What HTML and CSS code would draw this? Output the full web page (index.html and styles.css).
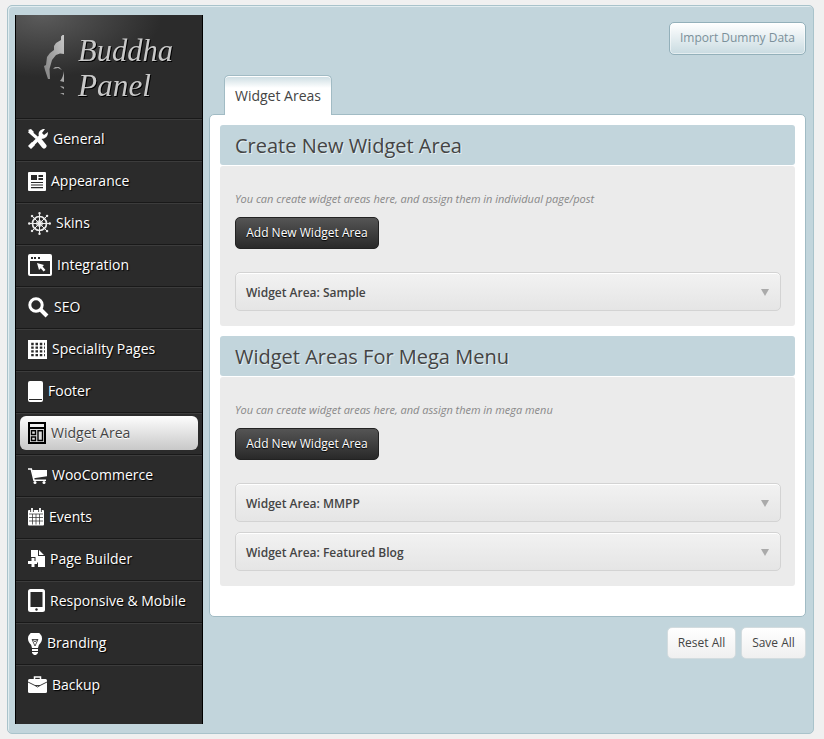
FILE: index.html
```html
<!DOCTYPE html>
<html lang="en">
<head>
<meta charset="utf-8">
<title>Buddha Panel</title>
<link rel="stylesheet" href="styles.css">
</head>
<body>
<div class="wrapper">
  <aside class="sidebar">
    <header class="brand">
      <svg class="face" width="24" height="62" viewBox="0 0 24 62"><defs><linearGradient id="silver" x1="1" x2="0" y1="0" y2="1"><stop stop-color="#c8c8c8"/><stop offset="1" stop-color="#777"/></linearGradient></defs><path fill="url(#silver)" d="M20 0H18.500L17 1.500V5L12 8L10 11V15L6 18L3 22L2 30L0 31L1 35L4 44H6L5.500 34L8 25L12 20L16 18.500L20 19ZM9 34L11 32H15L18 35L14 33ZM20 36V47L16 46Q19 43 20 36ZM16 51.500Q18 51 20 52V54ZM16 58H20V60Z"/></svg>
      <svg class="wordmark" width="102" height="70" viewBox="0 0 102 70"><text x="2" y="26" textLength="95" lengthAdjust="spacingAndGlyphs">Buddha</text><text x="2" y="61" textLength="73" lengthAdjust="spacingAndGlyphs">Panel</text></svg>
    </header>
    <nav>
      <a class="item"><svg class="up" width="20" height="20" viewBox="0 0 20 20"><path fill="none" stroke="#fff" stroke-width="3" d="M1 2L9 9"/><path fill="none" stroke="#fff" stroke-width="5" stroke-linecap="round" d="M12 12L16 17"/><path fill="none" stroke="#fff" stroke-width="3.6" d="M2 18L14 6"/><path fill="#fff" d="M11 8Q9 2 15 0L17 0L14 4L16 6L20 3Q20 10 13 10ZM0 1L3 0L6 3L4 5ZM0 17L4 13L7 16L3 20Z"/></svg><span>General</span></a>
      <a class="item"><svg width="18" height="19" viewBox="0 0 18 19"><rect width="18" height="19" rx="1" fill="#fff"/><path fill="none" stroke="#292929" stroke-width="1.2" d="M3 10.5H15M3 13H15M3 15.6H15"/><path fill="#292929" d="M3 3H9V8H3ZM10.500 3H15V5H10.500ZM10.500 6H15V8H10.500Z"/></svg><span>Appearance</span></a>
      <a class="item"><svg width="23" height="23" viewBox="0 0 23 23"><g fill="none" stroke="#eee"><circle cx="11.5" cy="11.5" r="7" stroke-width="1.7"/><circle cx="11.5" cy="11.5" r="2.7" stroke-width="1.2"/><path d="M11.5 1V22M1 11.5H22M4 4L19 19M19 4L4 19"/><path stroke-width="2.4" stroke-linecap="round" d="M11.5 1.2V1.300M11.500 21.700V21.800M1.200 11.500H1.300M21.700 11.500H21.800M4 4L4.100 4.100M19 19L19.100 19.100M19 4L19.100 3.900M4 19L4.100 18.900"/></g></svg><span>Skins</span></a>
      <a class="item"><svg class="up" width="24" height="22" viewBox="0 0 24 22"><rect width="24" height="22" rx="2" fill="#fff"/><path fill="#292929" d="M2 7H22V20H2ZM3 3H5V5H3ZM6 3H8V5H6ZM10 3H12V5H10Z"/><path fill="#fff" d="M9 9L16 11L14.5 12.6L17.5 16L15.5 17.5L12.8 14.3L11 16Z"/></svg><span>Integration</span></a>
      <a class="item"><svg width="21" height="21" viewBox="0 0 21 21"><circle cx="8" cy="8" r="6.2" fill="none" stroke="#fff" stroke-width="3"/><path stroke="#fff" stroke-width="4" d="M12 12L19 19"/></svg><span>SEO</span></a>
      <a class="item"><svg width="19" height="19" viewBox="0 0 19 19"><path fill="#fff" d="M0 0H19V19H0Z"/><path fill="none" stroke="#292929" stroke-width="2.3" stroke-dasharray="2.5 1.8" d="M3.2 4H17M3.2 7.7H17M3.2 11.4H17M3.2 15.1H17"/></svg><span>Speciality Pages</span></a>
      <a class="item"><svg width="15" height="21" viewBox="0 0 15 21"><rect width="15" height="21" rx="2" fill="#fff"/><path stroke="#292929" d="M1 18.5H14"/></svg><span>Footer</span></a>
      <a class="item active"><svg class="up" width="18" height="22" viewBox="0 0 18 22"><path d="M0 0H18V22H0Z"/><path fill="#eee" d="M2 2H16V5H2Z"/><path fill="#ddd" d="M2 7H16V20H2Z"/><path fill="none" stroke="#000" stroke-width="1.4" d="M3.5 8.7H7.5V12.5H3.5ZM3.5 15H7.5V18.5H3.5ZM10 8.7H14.5V18.5H10Z"/></svg><span>Widget Area</span></a>
      <a class="item"><svg width="19" height="16" viewBox="0 0 19 16"><path fill="none" stroke="#fff" stroke-width="1.6" d="M0 1H3.3L6 12.3H18"/><path fill="#fff" d="M4 2H19V8.2L5.7 10.2Z"/><circle cx="7" cy="14.5" r="1.5" fill="#fff"/><circle cx="16" cy="14.5" r="1.5" fill="#fff"/></svg><span>WooCommerce</span></a>
      <a class="item"><svg class="up" width="16" height="18" viewBox="0 0 16 18"><rect y="2" width="16" height="15.500" rx="1" fill="#fff"/><path fill="none" stroke="#292929" stroke-width=".7" d="M1 6H15M1 9.500H15M1 13H15M4.500 6V16.500M8 6V16.500M11.500 6V16.500"/><path stroke="#292929" stroke-width="3.5" d="M4 0V4M12 0V4"/><path stroke="#fff" stroke-width="1.8" d="M4 0V4M12 0V4"/></svg><span>Events</span></a>
      <a class="item"><svg class="up" width="17" height="18" viewBox="0 0 17 18"><path fill="#fff" d="M3 0H10V6H17V17H10V12.500H7.500V7H3ZM11 0L16 5H11ZM3.500 8H6.500V11H9V14H6.500V17H3.500V14H0V11H3.500Z"/></svg><span>Page Builder</span></a>
      <a class="item"><svg class="up" width="17" height="23" viewBox="0 0 17 23"><rect width="17" height="23" rx="2.5" fill="#fff"/><path fill="#292929" d="M2.5 3H14.5V18H2.5Z"/><circle cx="8.5" cy="20.5" r="1.2" fill="#292929"/></svg><span>Responsive &amp; Mobile</span></a>
      <a class="item"><svg width="14" height="22" viewBox="0 0 14 22"><path fill="#fff" d="M4 15Q4 12 1.5 10A7 7 0 1 1 12.5 10Q10 12 10 15ZM4 16H10V18H4ZM4 19H10V20L8 22H6L4 20Z"/><path fill="none" stroke="#292929" stroke-width=".8" d="M4 6.5H10L7 13ZM5 6.5L7 9L9 6.5"/></svg><span>Branding</span></a>
      <a class="item"><svg class="up" width="19" height="17" viewBox="0 0 19 17"><rect y="3" width="19" height="14" rx="1.5" fill="#fff"/><path fill="none" stroke="#fff" stroke-width="1.5" d="M6.5 3V1H12.5V3"/><path fill="none" stroke="#292929" stroke-width=".9" d="M0 6L7 9.5H12L19 6M7 9.5Q9.5 12.5 12 9.5"/></svg><span>Backup</span></a>
    </nav>
  </aside>
  <main class="content">
    <div class="toolbar"><button class="btn import">Import Dummy Data</button></div>
    <div class="tabs"><a class="tab">Widget Areas</a></div>
    <div class="panel">
      <section>
        <h2>Create New Widget Area</h2>
        <div class="body">
          <p>You can create widget areas here, and assign them in individual page/post</p>
          <button class="btn dark">Add New Widget Area</button>
          <div class="area"><span>Widget Area: Sample</span><i class="arrow"></i></div>
        </div>
      </section>
      <section>
        <h2>Widget Areas For Mega Menu</h2>
        <div class="body">
          <p>You can create widget areas here, and assign them in mega menu</p>
          <button class="btn dark">Add New Widget Area</button>
          <div class="area"><span>Widget Area: MMPP</span><i class="arrow"></i></div>
          <div class="area"><span>Widget Area: Featured Blog</span><i class="arrow"></i></div>
        </div>
      </section>
    </div>
    <div class="actions"><button class="btn reset">Reset All</button><button class="btn save">Save All</button></div>
  </main>
</div>
</body>
</html>
```
FILE: styles.css
```css
* { box-sizing: border-box; }
body { margin: 0; padding: 5px 0 0 7px; height: 739px; overflow: hidden; background: #f0f0f0; font-family: "Open Sans", sans-serif; color: #444; }
.wrapper { display: flex; width: 807px; height: 729px; padding: 9px 7px; border: 1px solid #a9c3cb; border-radius: 5px; background: #c2d5dc; box-shadow: inset 1px 1px 0 #e2edf0; }
.sidebar { width: 188px; height: 709px; border: solid #000; border-width: 0 1px; background: radial-gradient(ellipse 120px 62px at 26px 0, #5b5b5b, #2b2b2b) no-repeat 0 0 / 100% 103px, #2b2b2b; }
.brand { display: flex; height: 104px; padding: 20px 0 0 28px; border-bottom: 1px solid #191919; }
.face { flex: none; margin-right: 8px; }
.wordmark { flex: none; overflow: visible; font: italic 32px "Liberation Serif", serif; fill: #c9c9c9; filter: drop-shadow(1px 1px 0 #000); }
.item { display: flex; align-items: center; height: 42px; padding: 0 0 1px 12px; gap: 5px; border-top: 1px solid #3c3c3c; border-bottom: 1px solid #191919; color: #fff; font-size: 14px; white-space: nowrap; text-shadow: 1px 1px 1px #000; }
.item:last-child { border-bottom-color: transparent; }
.item svg { flex: none; }
.item .up { margin-bottom: 2px; }
.item span { position: relative; top: -1px; }
.active { position: relative; isolation: isolate; color: #444; text-shadow: 0 1px #fff; }
.active::before { content: ""; position: absolute; z-index: -1; left: 4px; right: 4px; top: 2px; height: 34px; border-radius: 6px; background: linear-gradient(#fdfdfd, #c8c8c8); }
.content { flex: 1; padding: 7px 0 0 6px; }
.toolbar { display: flex; justify-content: flex-end; height: 53px; }
.btn { display: block; padding: 0 0 2px; border: 1px solid #ccc; border-radius: 5px; font: 12px "Open Sans", sans-serif; color: #444; white-space: nowrap; }
.import { width: 137px; height: 33px; padding-bottom: 3px; border-color: #93b0ba; background: linear-gradient(#fff, #c9dbe1); color: #7b909a; box-shadow: inset 0 0 0 1px #ffffff80; }
.tabs { display: flex; height: 39px; padding-left: 15px; }
.tab { position: relative; width: 108px; height: 40px; border: 1px solid #a1bbc4; border-bottom: 0; border-radius: 5px 5px 0 0; background: linear-gradient(#cbdce2, #fff 12px); box-shadow: inset 0 1px #fff; font-size: 14px; line-height: 40px; text-align: center; }
.panel { width: 597px; height: 503px; padding: 10px; border: 1px solid #a1bbc4; border-radius: 5px; background: #fff; }
section { width: 575px; margin-bottom: 10px; }
h2 { height: 40px; margin: 0 0 1px; padding-left: 15px; border-radius: 3px; background: #c2d5dc; color: #444; font-size: 20px; font-weight: 400; line-height: 41px; text-shadow: 1px 1px #e5eff2; }
.body { height: 160px; padding: 24px 14px 0 15px; border-radius: 3px; background: #ebebeb; }
section + section .body { height: 209px; }
p { height: 18px; margin: 0 0 9px; color: #888; font-size: 11px; font-style: italic; line-height: 18px; letter-spacing: -.016px; }
.dark { width: 144px; height: 32px; margin-bottom: 23px; border-color: #222; background: linear-gradient(#555, #292929); color: #fff; font-size: 12px; text-shadow: 0 1px 1px #000; }
.area { display: flex; justify-content: space-between; align-items: center; height: 39px; margin-bottom: 10px; padding: 2px 11px 0 10px; border: 1px solid #d3d3d3; border-radius: 5px; background: linear-gradient(#f2f2f2, #e5e5e5); box-shadow: inset 0 1px #fff; font-size: 12px; font-weight: 600; }
.arrow { border: solid transparent; border-width: 7px 4px 0; border-top-color: #aaa; }
.actions { display: flex; justify-content: flex-end; gap: 5px; margin-top: 10px; }
.reset, .save { height: 32px; border-color: #d3dcdf; background: linear-gradient(#fff, #f0f0f0); }
.reset { width: 69px; }
.save { width: 65px; }
```
